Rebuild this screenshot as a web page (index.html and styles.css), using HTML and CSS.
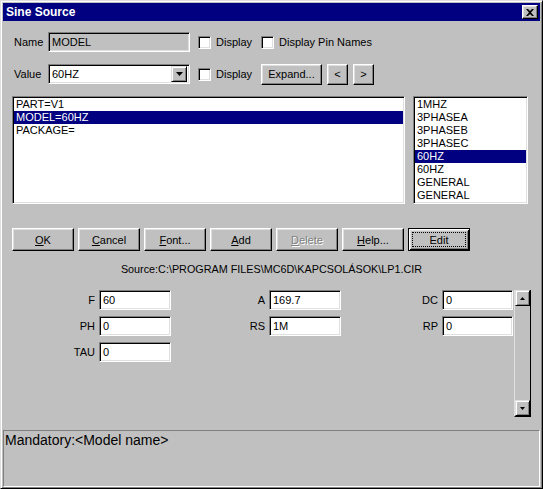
FILE: index.html
```html
<!DOCTYPE html>
<html>
<head>
<meta charset="utf-8">
<title>Sine Source</title>
<link rel="stylesheet" href="styles.css">
</head>
<body>
<div class="window">
  <div class="titlebar">
    <span class="title">Sine Source</span>
    <span class="close"><svg width="8" height="7" viewBox="0 0 8 7"><path d="M0 0 L2 0 L4 2 L6 0 L8 0 L5 3.5 L8 7 L6 7 L4 5 L2 7 L0 7 L3 3.5 Z" fill="#000"/></svg></span>
  </div>
  <div class="content">
    <div class="row row-name">
      <span class="lbl">Name</span>
      <div class="field field-disabled wide-field">MODEL</div>
      <span class="check check-first"><span class="box"></span>Display</span>
      <span class="check"><span class="box"></span>Display Pin Names</span>
    </div>
    <div class="row row-value">
      <span class="lbl">Value</span>
      <div class="field wide-field combo">
        <span class="combo-text">60HZ</span>
        <span class="drop"><svg width="7" height="4" viewBox="0 0 7 4"><path d="M0 0 H7 L3.5 4 Z" fill="#000"/></svg></span>
      </div>
      <span class="check check-first"><span class="box"></span>Display</span>
      <button class="btn btn-expand">Expand...</button>
      <button class="btn btn-arrow">&lt;</button>
      <button class="btn btn-arrow">&gt;</button>
    </div>
    <div class="lists">
      <ul class="list list-attrs">
        <li>PART=V1</li>
        <li class="sel">MODEL=60HZ</li>
        <li>PACKAGE=</li>
      </ul>
      <ul class="list list-models">
        <li>1MHZ</li>
        <li>3PHASEA</li>
        <li>3PHASEB</li>
        <li>3PHASEC</li>
        <li class="sel">60HZ</li>
        <li>60HZ</li>
        <li>GENERAL</li>
        <li>GENERAL</li>
      </ul>
    </div>
    <div class="buttons">
      <button class="btn btn-act"><u>O</u>K</button>
      <button class="btn btn-act"><u>C</u>ancel</button>
      <button class="btn btn-act"><u>F</u>ont...</button>
      <button class="btn btn-act"><u>A</u>dd</button>
      <button class="btn btn-act btn-disabled"><u>D</u>elete</button>
      <button class="btn btn-act"><u>H</u>elp...</button>
      <button class="btn btn-act btn-default"><span class="focus">Edit</span></button>
    </div>
    <div class="source">Source:C:\PROGRAM FILES\MC6D\KAPCSOLÁSOK\LP1.CIR</div>
    <div class="params">
      <div class="param-grid">
        <span class="plbl">F</span><div class="field pfield">60</div>
        <span class="plbl">A</span><div class="field pfield">169.7</div>
        <span class="plbl">DC</span><div class="field pfield">0</div>
        <span class="plbl">PH</span><div class="field pfield">0</div>
        <span class="plbl">RS</span><div class="field pfield">1M</div>
        <span class="plbl">RP</span><div class="field pfield">0</div>
        <span class="plbl">TAU</span><div class="field pfield">0</div>
      </div>
      <div class="scrollbar">
        <span class="sbtn"><svg width="5" height="3" viewBox="0 0 5 3"><path d="M2.5 0 L5 3 H0 Z" fill="#000"/></svg></span>
        <span class="track"></span>
        <span class="sbtn"><svg width="5" height="3" viewBox="0 0 5 3"><path d="M0 0 H5 L2.5 3 Z" fill="#000"/></svg></span>
      </div>
    </div>
  </div>
  <div class="status">Mandatory:&lt;Model name&gt;</div>
</div>
</body>
</html>
```

FILE: styles.css
```css
* { box-sizing: border-box; }
html, body { margin: 0; padding: 0; }
body {
  width: 543px;
  height: 489px;
  overflow: hidden;
  background: #c0c0c0;
  font-family: "Liberation Sans", Arial, sans-serif;
  font-size: 11px;
  color: #000;
}
.window {
  width: 543px;
  height: 489px;
  display: flex;
  flex-direction: column;
  background: #c0c0c0;
  border: 1px solid;
  border-color: #dfdfdf #000 #000 #dfdfdf;
  box-shadow: inset 1px 1px #fff, inset -1px -1px #808080;
  padding: 2px 2px 1px 2px;
}
.titlebar {
  height: 18px;
  background: #000080;
  color: #fff;
  display: flex;
  align-items: center;
  justify-content: space-between;
  padding: 0 2px 0 3px;
  flex: none;
}
.title { font-weight: bold; font-size: 12px; }
.close {
  width: 16px;
  height: 14px;
  background: #c0c0c0;
  border: 1px solid;
  border-color: #fff #000 #000 #fff;
  box-shadow: inset -1px -1px #808080, inset 1px 1px #dfdfdf;
  display: flex;
  align-items: center;
  justify-content: center;
}
.content {
  padding-left: 9px;
  display: flex;
  flex-direction: column;
  flex: none;
}
.row { display: flex; align-items: center; }
.row-name { margin-top: 11px; height: 20px; }
.row-value { margin-top: 11px; height: 22px; }
.lbl { width: 36px; padding-left: 2px; }
.field {
  background: #fff;
  border: 1px solid;
  border-color: #808080 #fff #fff #808080;
  box-shadow: inset 1px 1px #000, inset -1px -1px #dfdfdf;
  padding: 0 2px 0 3px;
  display: flex;
  align-items: center;
  height: 20px;
}
.field-disabled { background: #c0c0c0; }
.wide-field { width: 142px; }
.combo { justify-content: space-between; padding-right: 2px; }
.drop {
  width: 16px;
  height: 16px;
  background: #c0c0c0;
  border: 1px solid;
  border-color: #dfdfdf #000 #000 #dfdfdf;
  box-shadow: inset 1px 1px #fff, inset -1px -1px #808080;
  display: flex;
  align-items: center;
  justify-content: center;
}
.check { display: flex; align-items: center; }
.check-first { margin-left: 8px; width: 63px; }
.box {
  width: 13px;
  height: 13px;
  background: #fff;
  border: 1px solid;
  border-color: #808080 #fff #fff #808080;
  box-shadow: inset 1px 1px #000, inset -1px -1px #dfdfdf;
  margin-right: 5px;
}
.btn {
  font-family: "Liberation Sans", Arial, sans-serif;
  font-size: 11px;
  color: #000;
  padding: 0;
  background: #c0c0c0;
  border: 1px solid;
  border-color: #fff #000 #000 #fff;
  box-shadow: inset -1px -1px #808080, inset 1px 1px #dfdfdf;
  display: flex;
  align-items: center;
  justify-content: center;
}
.btn u { text-decoration: underline; text-underline-offset: 1px; }
.btn-expand { width: 61px; height: 21px; }
.btn-arrow { width: 21px; height: 21px; margin-left: 5px; }
.lists { display: flex; margin-top: 11px; height: 108px; gap: 8px; }
.list {
  list-style: none;
  margin: 0;
  padding: 1px 1px 0 1px;
  background: #fff;
  border: 1px solid;
  border-color: #808080 #fff #fff #808080;
  box-shadow: inset 1px 1px #000, inset -1px -1px #dfdfdf;
  height: 108px;
}
.list li { height: 13px; line-height: 13px; padding-left: 2px; }
.list li.sel { background: #000080; color: #fff; }
.list-attrs { width: 393px; }
.list-models { width: 115px; }
.buttons { display: flex; gap: 4px; margin-top: 24px; height: 23px; }
.btn-act { width: 62px; height: 23px; }
.btn-disabled { color: #808080; text-shadow: 1px 1px #fff; }
.btn-default {
  border: 1px solid #000;
  box-shadow: inset 1px 1px #fff, inset -1px -1px #000, inset 2px 2px #dfdfdf, inset -2px -2px #808080;
  padding: 3px;
}
.focus {
  flex: 1;
  align-self: stretch;
  border: 1px dotted #000;
  display: flex;
  align-items: center;
  justify-content: center;
}
.source {
  margin-top: 10px;
  height: 16px;
  line-height: 16px;
  text-align: center;
  padding-right: 9px;
  font-size: 10.8px;
}
.params { display: flex; margin-top: 13px; height: 127px; }
.param-grid {
  display: grid;
  grid-template-columns: 87px 72px 98px 72px 101px 71px;
  grid-auto-rows: 20px;
  row-gap: 6px;
  align-content: start;
}
.plbl { text-align: right; padding-right: 4px; line-height: 20px; }
.pfield { height: 20px; }
.scrollbar {
  margin-left: 1px;
  width: 17px;
  height: 127px;
  display: flex;
  flex-direction: column;
  background: #c0c0c0;
  border-right: 1px solid #000;
  border-bottom: 1px solid #000;
  border-left: 1px solid #dfdfdf;
}
.track { flex: 1; }
.sbtn {
  width: 15px;
  height: 16px;
  background: #c0c0c0;
  border: 1px solid;
  border-color: #dfdfdf #000 #000 #dfdfdf;
  box-shadow: inset 1px 1px #fff, inset -1px -1px #808080;
  display: flex;
  align-items: center;
  justify-content: center;
}
.status {
  margin-top: 13px;
  flex: 1;
  border: 1px solid;
  border-color: #808080 #fff #fff #808080;
  font-size: 14px;
  padding: 1px 0 0 1px;
  line-height: 16px;
}
```
